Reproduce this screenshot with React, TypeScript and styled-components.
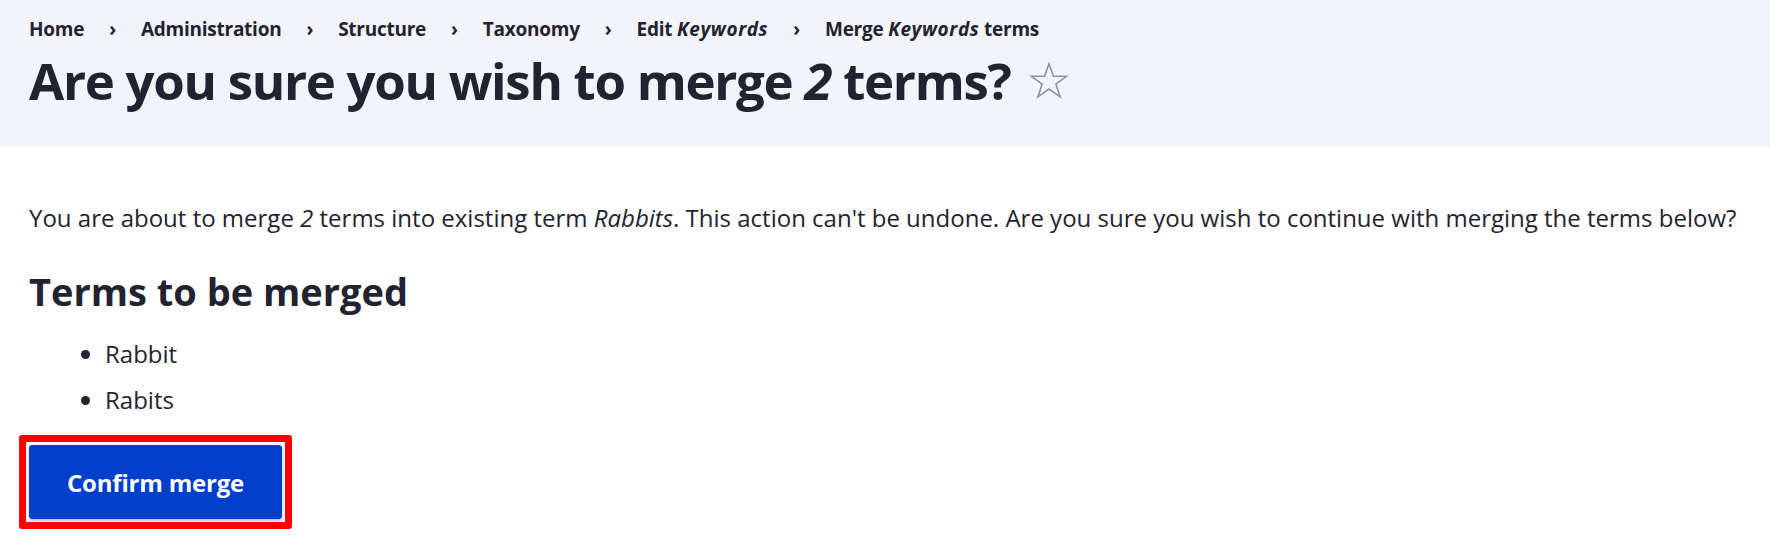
import styled, { createGlobalStyle } from 'styled-components'

const GlobalStyle = createGlobalStyle`
    html, body {
        margin: 0;
        padding: 0;
        background: #ffffff;
    }
    body {
        min-height: 100vh;
        font-family: 'Open Sans', 'Noto Sans', sans-serif;
        color: #222330;
    }
`

const crumbs: { label: string; em?: string; after?: string }[] = [
    { label: 'Home' },
    { label: 'Administration' },
    { label: 'Structure' },
    { label: 'Taxonomy' },
    { label: 'Edit ', em: 'Keywords' },
    { label: 'Merge ', em: 'Keywords', after: ' terms' },
]

const terms = ['Rabbit', 'Rabits']

const App = () => {
    return (
        <>
            <GlobalStyle />
            <Header>
                <Breadcrumb>
                    {crumbs.map((c, i) => (
                        <Crumb key={i}>
                            {i > 0 && <Sep>›</Sep>}
                            <span>
                                {c.label}
                                {c.em && <em>{c.em}</em>}
                                {c.after}
                            </span>
                        </Crumb>
                    ))}
                </Breadcrumb>
                <TitleRow>
                    <Title>
                        Are you sure you wish to merge <em>2</em> terms?
                    </Title>
                    <Star width="40" height="38" viewBox="0 0 40 38" aria-hidden>
                        <path
                            d="M20 1.8 L24.4 14.3 L37.6 14.3 L26.9 22.1 L31 34.8 L20 27 L9 34.8 L13.1 22.1 L2.4 14.3 L15.6 14.3 Z"
                            fill="none"
                            stroke="#8e929c"
                            strokeWidth="1.6"
                            strokeLinejoin="miter"
                        />
                    </Star>
                </TitleRow>
            </Header>
            <Main>
                <Intro>
                    You are about to merge <em>2</em> terms into existing term <em>Rabbits</em>. This
                    action can't be undone. Are you sure you wish to continue with merging the terms
                    below?
                </Intro>
                <SubTitle>Terms to be merged</SubTitle>
                <TermList>
                    {terms.map((t) => (
                        <li key={t}>{t}</li>
                    ))}
                </TermList>
                {/* red annotation frame around the action */}
                <Highlight>
                    <ConfirmButton type="button">Confirm merge</ConfirmButton>
                </Highlight>
            </Main>
        </>
    )
}

export default App

const Header = styled.header`
    background: #f3f4f9;
    padding: 17px 29px 33px;
    height: 147px;
    box-sizing: border-box;
`

const Breadcrumb = styled.nav`
    display: flex;
    align-items: center;
    font-size: 19px;
    line-height: 24px;
    font-weight: 700;
    letter-spacing: -0.25px;

    em {
        letter-spacing: 0.6px;
    }
`

const Crumb = styled.div`
    display: flex;
    align-items: center;
    white-space: nowrap;
`

const Sep = styled.span`
    display: inline-block;
    margin: 0 25px;
    font-weight: 700;
`

const TitleRow = styled.div`
    display: flex;
    align-items: center;
    gap: 18px;
    margin-top: 7px;
`

const Title = styled.h1`
    margin: 0;
    font-size: 51px;
    line-height: 65px;
    font-weight: 700;
    letter-spacing: -1.3px;
    white-space: nowrap;
`

const Star = styled.svg`
    flex: none;
`

const Main = styled.main`
    padding: 53px 29px 30px;
`

const Intro = styled.p`
    margin: 0;
    font-size: 24px;
    line-height: 36px;
`

const SubTitle = styled.h2`
    margin: 32px 0 0;
    font-size: 38px;
    line-height: 46px;
    font-weight: 700;
`

const TermList = styled.ul`
    margin: 22px 0 0;
    padding-left: 76px;
    font-size: 24px;
    line-height: 36px;

    li + li {
        margin-top: 10px;
    }
`

const Highlight = styled.div`
    display: inline-flex;
    margin: 17px 0 0 -10px;
    padding: 3px;
    border: 7px solid #ff0000;
    border-radius: 3px;
    background: #f7f7f9;
`

const ConfirmButton = styled.button`
    display: inline-flex;
    align-items: center;
    justify-content: center;
    width: 253px;
    height: 74px;
    padding: 0 12px;
    border: 1px solid #003ecc;
    border-radius: 3px;
    background: #003ecc;
    color: #ffffff;
    font-family: inherit;
    font-size: 24px;
    font-weight: 700;
    letter-spacing: -0.2px;
    white-space: nowrap;
    box-shadow: 0 2px 3px rgba(0, 0, 0, 0.2);
    cursor: pointer;
`
